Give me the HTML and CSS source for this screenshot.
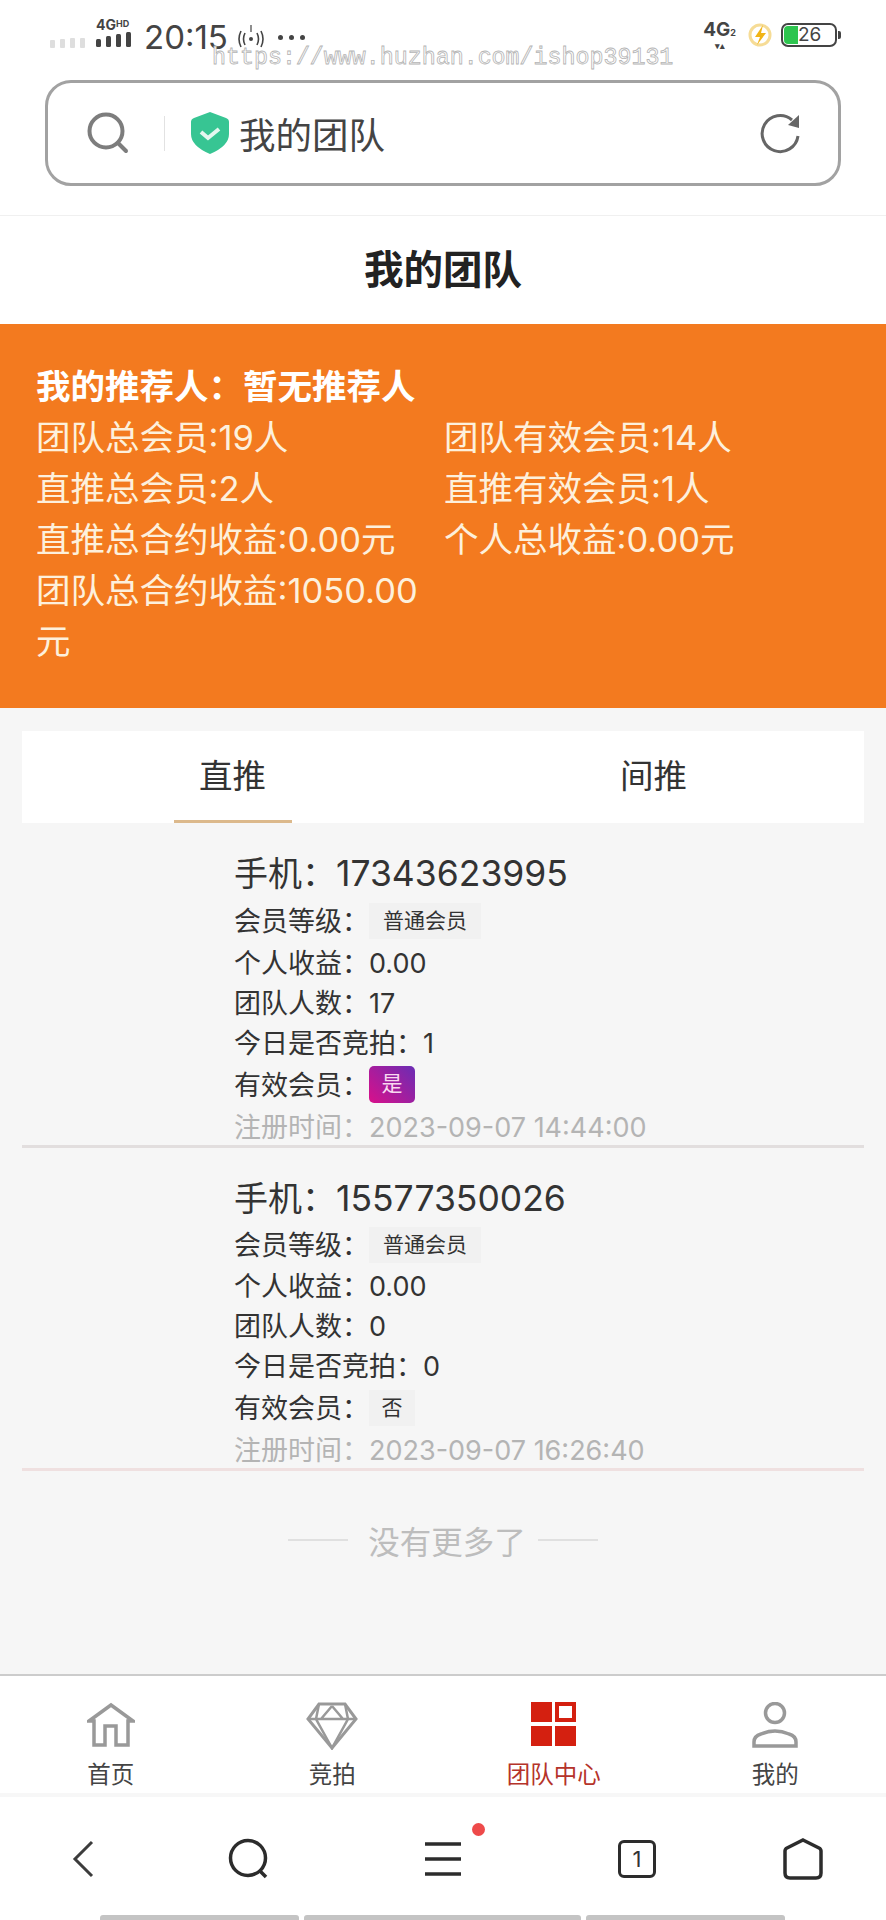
FILE: index.html
```html
<!DOCTYPE html>
<html lang="zh-CN">
<head>
  <meta charset="UTF-8">
  <title>我的团队</title>
  <link rel="stylesheet" href="styles.css">
</head>
<body>
  <div class="page">

    <!-- 浏览器顶部 -->
    <header class="browser-top">
      <div class="status">
        <div class="status-left">
          <svg class="sig-off" width="35" height="10" viewBox="0 0 35 10"><rect x="0" y="2" width="5" height="8" rx="1"/><rect x="10" y="1" width="5" height="9" rx="1"/><rect x="20" y="0" width="5" height="10" rx="1"/><rect x="30" y="0" width="5" height="10" rx="1"/></svg>
          <div class="sig-on">
            <span class="sig-label">4G<sup>HD</sup></span>
            <svg width="36" height="15" viewBox="0 0 36 15"><rect x="0" y="7" width="5" height="8" rx="1.5"/><rect x="10" y="4" width="5" height="11" rx="1.5"/><rect x="20" y="2" width="5" height="13" rx="1.5"/><rect x="30" y="0" width="5" height="15" rx="1.5"/></svg>
          </div>
          <span class="time">20:15</span>
          <svg class="hotspot" width="30" height="26" viewBox="0 0 30 26" fill="none"><circle cx="15" cy="15" r="2" fill="#444"/><path d="M9 9q-3 6 0 12M21 9q3 6 0 12M5 7q-4 8 0 16M25 7q4 8 0 16" stroke="#444" stroke-width="1.6"/><path d="M15 1v7" stroke="#444" stroke-width="1.2"/></svg>
          <span class="dots"><i></i><i></i><i></i></span>
        </div>
        <div class="status-right">
          <div class="net"><span>4G<small>2</small></span><em>▾▴</em></div>
          <svg width="24" height="26" viewBox="0 0 24 26"><circle cx="12" cy="13" r="10" fill="none" stroke="#f6dc96" stroke-width="3"/><path d="M15 3 7 15h5l-3 8 9-12h-5z" fill="#f1b416"/></svg>
          <div class="battery"><span class="battery-fill"></span><span class="battery-num">26</span></div>
        </div>
      </div>

      <div class="address">
        <svg class="addr-icon" width="42" height="42" viewBox="0 0 42 42" fill="none" stroke="#7d7d7d" stroke-width="4"><circle cx="19" cy="19" r="16.5"/><path d="M31 31l8 8" stroke-linecap="round"/></svg>
        <span class="addr-line"></span>
        <svg width="40" height="42" viewBox="0 0 40 42"><path d="M20 0 36 6q3 1 3 4v12q0 12-19 20Q1 34 1 22V10q0-3 3-4z" fill="#37c593"/><path d="M11 20l7 6 11-9" fill="none" stroke="#e4f7ef" stroke-width="4"/></svg>
        <span class="addr-text">我的团队</span>
        <svg width="42" height="42" viewBox="0 0 42 42" fill="none" stroke="#666" stroke-width="3"><path d="M33 8A18 18 0 1 0 39 24"/><path d="M40 3v13L29 13z" fill="#666" stroke="none"/></svg>
      </div>
    </header>

    <div class="title">我的团队</div>

    <!-- 团队统计 -->
    <section class="summary">
      <div class="summary-head">我的推荐人：暂无推荐人</div>
      <div>团队总会员:19人</div>
      <div>团队有效会员:14人</div>
      <div>直推总会员:2人</div>
      <div>直推有效会员:1人</div>
      <div>直推总合约收益:0.00元</div>
      <div>个人总收益:0.00元</div>
      <div>团队总合约收益:1050.00元</div>
    </section>

    <div class="tabs">
      <div class="tab tab-active">直推</div>
      <div class="tab">间推</div>
    </div>

    <!-- 列表 -->
    <div class="list">
      <div class="member">
        <div class="phone">手机：<span class="phone-num">17343623995</span></div>
        <div class="row row-tag">会员等级：<span class="tag">普通会员</span></div>
        <div class="row">个人收益：0.00</div>
        <div class="row">团队人数：17</div>
        <div class="row">今日是否竞拍：1</div>
        <div class="row row-tag">有效会员：<span class="tag tag-yes">是</span></div>
        <div class="row row-time">注册时间：2023-09-07 14:44:00</div>
      </div>
      <div class="member member-last">
        <div class="phone">手机：<span class="phone-num">15577350026</span></div>
        <div class="row row-tag row-level">会员等级：<span class="tag">普通会员</span></div>
        <div class="row">个人收益：0.00</div>
        <div class="row">团队人数：0</div>
        <div class="row">今日是否竞拍：0</div>
        <div class="row row-tag">有效会员：<span class="tag tag-no">否</span></div>
        <div class="row row-time">注册时间：2023-09-07 16:26:40</div>
      </div>
      <div class="no-more"><span></span>没有更多了<span></span></div>
    </div>

    <!-- 底部导航 -->
    <nav class="tabbar">
      <div class="tabbar-item">
        <svg width="48" height="46" viewBox="0 0 48 46" fill="none" stroke="#999" stroke-width="3.500"><path d="M2 19 24 3l22 16h-5v24H29V24H18v19H7V19z"/></svg>
        <span>首页</span>
      </div>
      <div class="tabbar-item">
        <svg width="52" height="48" viewBox="0 0 52 48" fill="none" stroke="#999" stroke-width="2.500"><path d="M13 2h26l11 15-24 29L2 17z" stroke-width="3"/><path d="M2 17h48M13 2l-3 15 16 29 16-29-3-15M26 4 15 17M26 4l11 13"/></svg>
        <span>竞拍</span>
      </div>
      <div class="tabbar-item tabbar-on">
        <svg width="45" height="45" viewBox="0 0 45 45" fill="#d42010"><rect x="0" y="0" width="21" height="20"/><rect x="26" y="2" width="17" height="16" fill="none" stroke="#d42010" stroke-width="4"/><rect x="0" y="24" width="21" height="20"/><rect x="24" y="24" width="21" height="20"/></svg>
        <span>团队中心</span>
      </div>
      <div class="tabbar-item">
        <svg width="46" height="46" viewBox="0 0 46 46" fill="none" stroke="#999" stroke-width="3.500"><circle cx="23" cy="11" r="9.500"/><path d="M2 44v-4q0-6 7-8 7-3 14-3t14 3q7 2 7 8v4z"/></svg>
        <span>我的</span>
      </div>
    </nav>

    <!-- 浏览器底部 -->
    <footer class="toolbar">
      <div class="tool-icons">
        <svg width="22" height="38" viewBox="0 0 22 38" fill="none" stroke="#3c3c3c" stroke-width="3"><path d="M20 2 3 19l17 17"/></svg>
        <svg width="42" height="42" viewBox="0 0 42 42" fill="none" stroke="#2c2c2c" stroke-width="3.500"><circle cx="20" cy="20" r="17.500"/><path d="M31 32l7 7"/></svg>
        <div class="tool-menu">
          <svg width="36" height="34" viewBox="0 0 36 34" fill="none" stroke="#2c2c2c" stroke-width="3.500"><path d="M0 2h36M0 17h36M0 32h36"/></svg>
          <i class="red-dot"></i>
        </div>
        <div class="tool-tab">1</div>
        <svg width="40" height="42" viewBox="0 0 40 42" fill="none" stroke="#2c2c2c" stroke-width="3.500"><path d="M20 2 36 10q2 1 2 3v22q0 5-5 5H7q-5 0-5-5V13q0-2 2-3z"/></svg>
      </div>
      <div class="gesture"><i class="g1"></i><i class="g2"></i><i class="g3"></i></div>
    </footer>

    <div class="watermark">https://www.huzhan.com/ishop39131</div>
  </div>
</body>
</html>
```

FILE: styles.css
```css
body {
  margin: 0;
  font-family: Inter, "Noto Sans CJK SC", sans-serif;
  color: #333;
}

.page {
  position: relative;
  width: 886px;
  height: 1920px;
  display: flex;
  flex-direction: column;
  background-color: #f6f6f6;
  overflow: hidden;
}

/* 顶部 */
.browser-top {
  height: 216px;
  padding: 14px 45px 0;
  box-sizing: border-box;
  background-color: #fff;
  border-bottom: 1px solid #f0f0f0;
}

.status {
  height: 46px;
  margin: 0 0 20px;
  display: flex;
  justify-content: space-between;
}

.status-left, .status-right {
  display: flex;
  align-items: center;
}

.status-left {
  margin-left: 5px;
}

.status-right {
  margin: 0 1px 4px 0;
  gap: 9px;
}

.sig-off {
  fill: #dedede;
  margin: 11px 10px 0 0;
}

.sig-on {
  fill: #444;
  display: flex;
  flex-direction: column;
  margin: 0 0 9px 1px;
}

.sig-label {
  font-size: 14px;
  line-height: 14px;
  font-weight: bold;
  color: #444;
}

.sig-label sup {
  font-size: 9px;
  line-height: 8px;
  vertical-align: 3px;
}

.time {
  margin-left: 12px;
  font-size: 33px;
  color: #444;
}

.hotspot {
  margin-left: 8px;
}

.dots {
  margin-left: 12px;
  display: flex;
  gap: 6px;
}

.dots i {
  width: 5px;
  height: 5px;
  border-radius: 50%;
  background-color: #444;
}

.net {
  display: flex;
  flex-direction: column;
  align-items: center;
  font-size: 19px;
  font-weight: bold;
  line-height: 18px;
  color: #444;
  margin-right: 3px;
}

.net small {
  font-size: 9px;
}

.net em {
  font-style: normal;
  font-size: 9px;
  line-height: 8px;
}

.battery {
  position: relative;
  width: 52px;
  height: 20px;
  border: 2.5px solid #444;
  border-radius: 7px;
  margin-right: 3px;
}

.battery::after {
  content: "";
  position: absolute;
  right: -6px;
  top: 6px;
  width: 3px;
  height: 8px;
  background-color: #444;
  border-radius: 0 2px 2px 0;
}

.battery-fill {
  position: absolute;
  left: 1px;
  top: 1px;
  width: 14px;
  height: 18px;
  background-color: #2ec54f;
  border-radius: 4px 0 0 4px;
}

.battery-num {
  position: absolute;
  left: 15px;
  top: 0;
  font-size: 19px;
  line-height: 20px;
  color: #444;
}

.address {
  height: 106px;
  box-sizing: border-box;
  display: flex;
  align-items: center;
  border: 3px solid #a2a2a2;
  border-radius: 26px;
  padding: 0 37px 0 39px;
}

.addr-line {
  width: 1px;
  height: 35px;
  margin: 0 25px 0 35px;
  background-color: #e2e2e2;
}

.addr-text {
  flex: 1;
  margin-left: 9px;
  font-size: 36.5px;
  color: #444;
}

.title {
  height: 108px;
  line-height: 108px;
  text-align: center;
  font-size: 39.5px;
  font-weight: bold;
  color: #222;
  background-color: #fff;
}

/* 统计 */
.summary {
  height: 384px;
  box-sizing: border-box;
  padding: 37px 0 0 36px;
  display: grid;
  grid-template-columns: 408px 1fr;
  grid-auto-rows: min-content;
  background-color: #f37a1f;
  color: #fdf0dc;
  font-size: 34.5px;
  line-height: 51px;
}

.summary-head {
  grid-column: 1 / 3;
  font-weight: bold;
  color: #fff;
}

/* 选项卡 */
.tabs {
  margin: 23px 22px 0;
  height: 92px;
  display: flex;
  background-color: #fff;
}

.tab {
  position: relative;
  flex: 1;
  text-align: center;
  font-size: 33.5px;
  line-height: 90px;
}

.tab-active::after {
  content: "";
  position: absolute;
  left: 152px;
  bottom: 0;
  width: 118px;
  height: 3px;
  background-color: #dcb98c;
}

/* 列表 */
.list {
  flex: 1;
  margin: 0 22px;
}

.member {
  height: 322px;
  padding-left: 212px;
  border-bottom: 3px solid #e2dede;
  overflow: hidden;
}

.member-last {
  height: 320px;
  border-bottom-color: #efe0e0;
}

.phone {
  margin-top: 28px;
  font-size: 34px;
  line-height: 46px;
}

.phone-num {
  font-size: 35.5px;
}

.row {
  display: flex;
  align-items: center;
  height: 40px;
  font-size: 27px;
  color: #333;
}

.row-tag {
  height: 44px;
}

.row-level {
  height: 42px;
}

.row-time {
  color: #b4b4b4;
}

.tag {
  margin-top: 3px;
  padding: 0 14px;
  height: 36px;
  line-height: 36px;
  font-size: 21px;
  background-color: #f1f1f1;
}

.tag-yes, .tag-no {
  padding: 0 12.5px;
}

.tag-yes {
  height: 37px;
  color: #f9d9f0;
  border-radius: 5px;
  background: linear-gradient(45deg, #d9108a, #6a2db4);
}

.no-more {
  margin-top: 46px;
  display: flex;
  justify-content: center;
  align-items: center;
  gap: 16px;
  font-size: 31.5px;
  color: #bdbdbd;
}

.no-more span {
  width: 60px;
  height: 2px;
  background-color: #e0e0e0;
}

.no-more span:first-child {
  margin-right: 4px;
}

.no-more span:last-child {
  margin-left: -4px;
}

/* 底部导航 */
.tabbar {
  height: 123px;
  box-sizing: border-box;
  display: flex;
  padding: 26px 0 2px;
  border-top: 2px solid #ccc;
  border-bottom: 4px solid #f7f7f7;
  background-color: #fff;
}

.tabbar-item {
  flex: 1;
  display: flex;
  flex-direction: column;
  align-items: center;
  justify-content: space-between;
  font-size: 23.5px;
  line-height: 32px;
  color: #444;
}

.tabbar-on {
  color: #b5332a;
}

.toolbar {
  height: 123px;
  background-color: #fff;
  display: flex;
  flex-direction: column;
}

.tool-icons {
  flex: 1;
  display: grid;
  grid-template-columns: 166px 166px 222px 166px 166px;
  justify-items: center;
  align-items: center;
  padding-top: 5px;
}

.tool-menu {
  position: relative;
  width: 36px;
  height: 34px;
}

.red-dot {
  position: absolute;
  left: 47px;
  top: -19px;
  width: 13px;
  height: 13px;
  border-radius: 50%;
  background-color: #ee4a4a;
}

.tool-tab {
  width: 32px;
  height: 32px;
  border: 3.5px solid #2c2c2c;
  border-radius: 6px;
  text-align: center;
  font-size: 22px;
  line-height: 32px;
  color: #333;
}

.gesture {
  height: 5px;
  display: flex;
  gap: 5px;
  padding-left: 100px;
}

.gesture i {
  background-color: #c4c4c4;
  border-radius: 3px 3px 0 0;
}

.g1 {
  width: 199px;
}

.g2 {
  width: 277px;
}

.g3 {
  width: 199px;
}

/* 水印 */
.watermark {
  position: absolute;
  left: 212px;
  top: 43px;
  font-family: "Liberation Mono", monospace;
  font-size: 23.3px;
  line-height: 30px;
  color: #fff;
  -webkit-text-stroke: 0.8px #b4b4b4;
}
```
